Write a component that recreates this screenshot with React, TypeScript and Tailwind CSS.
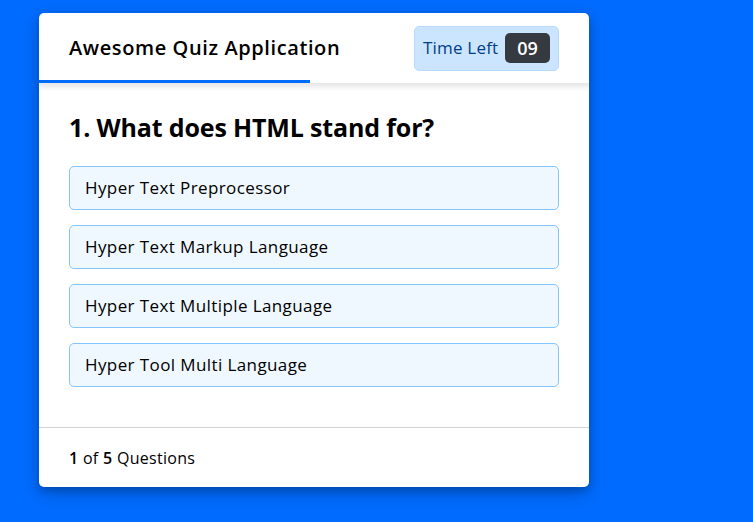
const options = [
  "Hyper Text Preprocessor",
  "Hyper Text Markup Language",
  "Hyper Text Multiple Language",
  "Hyper Tool Multi Language",
];

export default function App() {
  return (
    <div
      className="min-h-screen w-full bg-[#006cff] pt-[13px] pl-[39px]"
      style={{ fontFamily: '"Open Sans", "Liberation Sans", sans-serif' }}
    >
      <div className="w-[550px] overflow-hidden rounded-[5px] bg-white shadow-[0_4px_8px_0_rgba(0,0,0,0.2),0_6px_20px_0_rgba(0,0,0,0.19)]">
        {/* Header */}
        <header className="relative z-10 flex h-[70px] items-center justify-between px-[30px] shadow-[0_3px_5px_1px_rgba(0,0,0,0.1)]">
          <div className="text-[20px] font-semibold tracking-[0.6px] text-black">
            Awesome Quiz Application
          </div>
          <div className="flex h-[45px] w-[145px] items-center justify-between rounded-[5px] border border-[#b8daff] bg-[#cce5ff] px-[8px] text-[#004085]">
            <span className="text-[17px] tracking-[0.2px]">Time Left</span>
            <span className="flex h-[30px] w-[45px] items-center justify-center rounded-[5px] bg-[#343a40] text-[18px] font-semibold text-white">
              09
            </span>
          </div>
          <div className="absolute bottom-0 left-0 h-[3px] w-[271px] bg-[#006cff]" />
        </header>

        {/* Question */}
        <section className="px-[30px] pt-[25px] pb-[40px]">
          <h2 className="text-[25px] leading-[38px] font-bold tracking-[-0.15px] text-black">
            1. What does HTML stand for?
          </h2>
          <div className="mt-[20px] flex flex-col gap-[15px]">
            {options.map((o) => (
              <div
                key={o}
                className="flex h-[44px] items-center rounded-[5px] border border-[#84c5fe] bg-[#f0f8ff] px-[15px] text-[17px] tracking-[0.4px] text-black"
              >
                {o}
              </div>
            ))}
          </div>
        </section>

        {/* Footer */}
        <footer className="flex h-[60px] items-center border-t border-[#d4d4d4] px-[30px] text-[16px] tracking-[0.3px] text-black">
          <span>
            <b className="font-semibold">1</b> of <b className="font-semibold">5</b> Questions
          </span>
        </footer>
      </div>
    </div>
  );
}
